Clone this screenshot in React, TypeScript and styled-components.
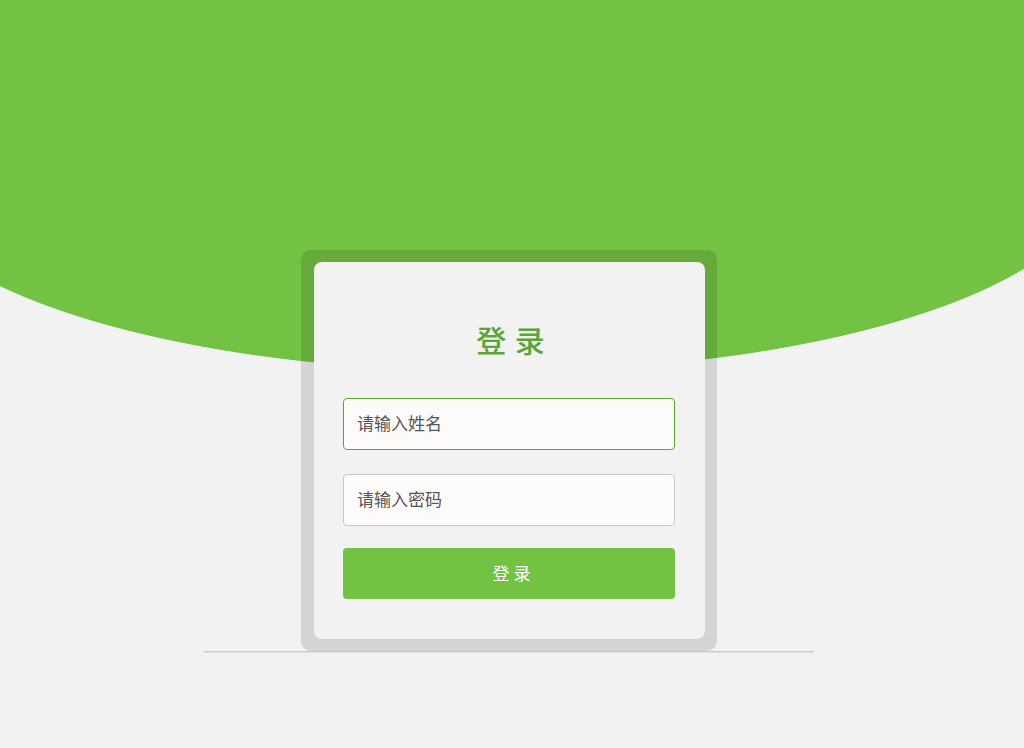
import React from "react";
import styled, { createGlobalStyle } from "styled-components";

const GlobalStyle = createGlobalStyle`
  html, body {
    margin: 0;
    padding: 0;
  }
  body {
    font-family: "Noto Sans CJK SC", "Noto Sans", sans-serif;
    background: #f2f2f2;
  }
`;

// green arc: flat top band + lower half of a wide ellipse
const Page = styled.div`
  min-height: 748px;
  display: flex;
  flex-direction: column;
  align-items: center;
  padding: 250px 6px 0 0;
  box-sizing: border-box;
  background:
    linear-gradient(#73c244, #73c244) top left / 100% 178px no-repeat,
    radial-gradient(ellipse 600px 195px at 496px 177px, #73c244 99.6%, #f2f2f2 100%);
`;

const Stage = styled.div`
  width: 610px;
  display: flex;
  justify-content: center;
  border-bottom: 1px solid #c9c9c9;
  box-shadow: 0 1px 0 #e2e2e2;
`;

const Frame = styled.div`
  width: 416px;
  box-sizing: border-box;
  padding: 12px 12px 12px 13px;
  background: rgba(0, 0, 0, 0.12);
  border-radius: 10px;
`;

const Card = styled.form`
  background: #f2f2f2;
  border-radius: 8px;
  padding: 57px 30px 40px 29px;
  display: flex;
  flex-direction: column;
`;

const Title = styled.h2`
  margin: 0 0 39px;
  padding-left: 4px;
  height: 40px;
  line-height: 40px;
  text-align: center;
  font-size: 30px;
  font-weight: 500;
  color: #5ba536;
  letter-spacing: 1px;
`;

const Field = styled.input<{ $active?: boolean }>`
  height: 52px;
  box-sizing: border-box;
  margin: 0 0 ${(p) => (p.$active ? 24 : 22)}px;
  padding: 0 13px 3px;
  border: 1px solid ${(p) => (p.$active ? "#5aa832" : "#c8c8c8")};
  border-radius: 4px;
  background: #fdfbfa;
  font-family: inherit;
  font-size: 17px;
  color: #333;
  outline: none;

  &::placeholder {
    color: #555;
  }
`;

const Submit = styled.button`
  height: 51px;
  padding: 0 0 2px 5px;
  border: 0;
  border-radius: 4px;
  background: #73c244;
  color: #fff;
  font-family: inherit;
  font-size: 17px;
  cursor: pointer;
`;

export default function App() {
  return (
    <Page>
      <GlobalStyle />
      <Stage>
        <Frame>
          <Card onSubmit={(e) => e.preventDefault()}>
            <Title>登 录</Title>
            <Field $active placeholder="请输入姓名" />
            <Field type="password" placeholder="请输入密码" />
            <Submit type="submit">登 录</Submit>
          </Card>
        </Frame>
      </Stage>
    </Page>
  );
}
